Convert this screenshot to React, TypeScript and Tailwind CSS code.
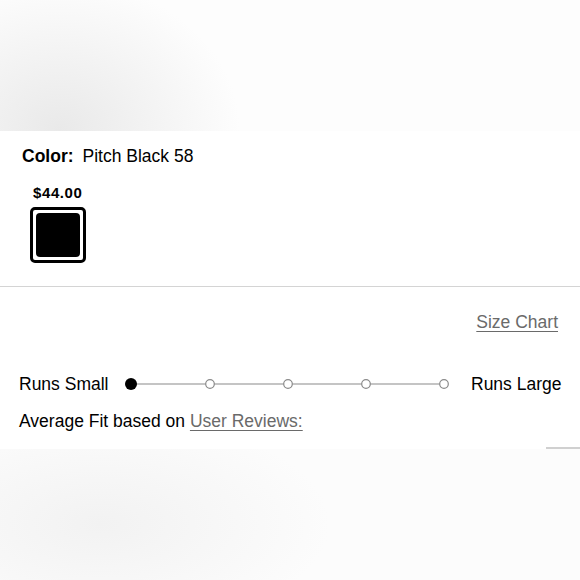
import React from "react";

export default function App() {
  const font = { fontFamily: '"Liberation Sans", Arial, sans-serif' };
  return (
    <div className="w-[580px] h-[580px] overflow-hidden flex flex-col bg-white" style={font}>
      <div className="h-[131px] bg-[radial-gradient(ellipse_180px_150px_at_60px_130px,#e9e9e9_0%,#f4f4f4_55%,#fdfdfd_100%)]" />
      <div className="h-[318px] bg-white flex flex-col">
        <div className="pl-[22px] mt-[15px] text-[17.5px] leading-[20px] text-black">
          <span className="font-bold">Color:</span>
          <span className="ml-[9px]">Pitch Black 58</span>
        </div>
        <div className="pl-[33px] mt-[18px] text-[15px] leading-[17px] font-bold text-black tracking-[0.6px]">$44.00</div>
        <div className="ml-[30px] mt-[6px] w-[56px] h-[56px] border-[3px] border-black rounded-[5px] p-[3px]">
          <div className="w-full h-full bg-black rounded-[4px]" />
        </div>
        <div className="mt-[23px] h-[1px] bg-[#d4d4d4]" />
        <div className="flex justify-end pr-[22px] mt-[25px]">
          <span className="text-[17.5px] leading-[20px] text-[#6a6a6a] underline underline-offset-[3px]">Size Chart</span>
        </div>
        <div className="flex items-center mt-[42px] pl-[19px] h-[20px]">
          <span className="text-[17.5px] leading-[20px] text-black w-[106px] whitespace-nowrap">Runs Small</span>
          <svg width="328" height="14" viewBox="0 0 328 14" className="shrink-0">
            <line x1="6" y1="7" x2="319" y2="7" stroke="#8a8a8a" strokeWidth="1.2" />
            <circle cx="6" cy="7" r="6" fill="#000" />
            <circle cx="85" cy="7" r="4.3" fill="#fff" stroke="#8a8a8a" strokeWidth="1.2" />
            <circle cx="163" cy="7" r="4.3" fill="#fff" stroke="#8a8a8a" strokeWidth="1.2" />
            <circle cx="241" cy="7" r="4.3" fill="#fff" stroke="#8a8a8a" strokeWidth="1.2" />
            <circle cx="319" cy="7" r="4.3" fill="#fff" stroke="#8a8a8a" strokeWidth="1.2" />
          </svg>
          <span className="ml-[18px] text-[17.5px] leading-[20px] text-black whitespace-nowrap">Runs Large</span>
        </div>
        <div className="pl-[19px] mt-[17px] text-[17.5px] leading-[20px] text-black">
          Average Fit based on{" "}
          <span className="text-[#6a6a6a] underline underline-offset-[3px]">User Reviews:</span>
        </div>
        <div className="flex-1" />
        <div className="flex justify-end">
          <div className="w-[34px] h-[2px] bg-[#d0d0d0]" />
        </div>
      </div>
      <div className="flex-1 bg-[radial-gradient(ellipse_230px_110px_at_100px_75px,#f2f2f2_0%,#f8f8f8_60%,#fcfcfc_100%)]" />
    </div>
  );
}
